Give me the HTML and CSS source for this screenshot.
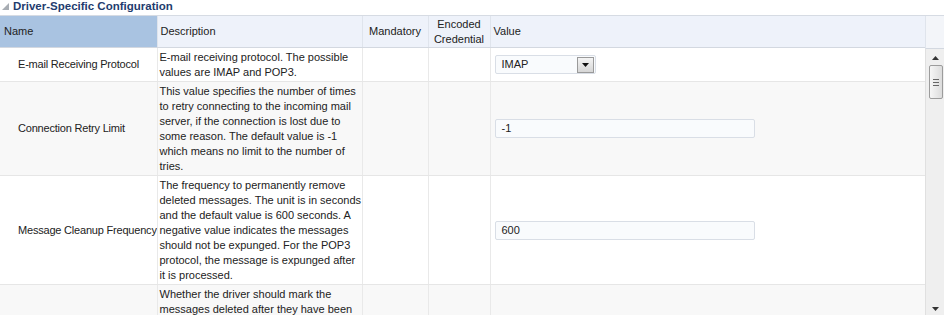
FILE: index.html
```html
<!DOCTYPE html>
<html lang="en">
<head>
    <meta charset="UTF-8">
    <title>Driver-Specific Configuration</title>
    <link rel="stylesheet" href="styles.css">
</head>
<body>
    <div class="section-title">
        <span class="disclosure"></span>
        <span>Driver-Specific Configuration</span>
    </div>
    <div class="grid">
        <div class="grid-main">
            <table class="config-table">
                <colgroup>
                    <col class="col-name">
                    <col class="col-desc">
                    <col class="col-mand">
                    <col class="col-enc">
                    <col class="col-value">
                </colgroup>
                <thead>
                    <tr>
                        <th class="sorted">Name</th>
                        <th>Description</th>
                        <th class="center">Mandatory</th>
                        <th class="center">Encoded Credential</th>
                        <th>Value</th>
                    </tr>
                </thead>
                <tbody>
                    <tr>
                        <td class="name">E-mail Receiving Protocol</td>
                        <td class="desc">E-mail receiving protocol. The possible<br>values are IMAP and POP3.</td>
                        <td></td>
                        <td></td>
                        <td class="value">
                            <div class="select">
                                <span>IMAP</span>
                                <span class="select-btn">
                                    <svg width="7" height="4" viewBox="0 0 7 4"><path d="M0 0h7L3.5 4z" fill="#111"/></svg>
                                </span>
                            </div>
                        </td>
                    </tr>
                    <tr class="alt">
                        <td class="name">Connection Retry Limit</td>
                        <td class="desc">This value specifies the number of times<br>to retry connecting to the incoming mail<br>server, if the connection is lost due to<br>some reason. The default value is -1<br>which means no limit to the number of<br>tries.</td>
                        <td></td>
                        <td></td>
                        <td class="value"><div class="text-input">-1</div></td>
                    </tr>
                    <tr>
                        <td class="name">Message Cleanup Frequency</td>
                        <td class="desc">The frequency to permanently remove<br>deleted messages. The unit is in seconds<br>and the default value is 600 seconds. A<br>negative value indicates the messages<br>should not be expunged. For the POP3<br>protocol, the message is expunged after<br>it is processed.</td>
                        <td></td>
                        <td></td>
                        <td class="value"><div class="text-input">600</div></td>
                    </tr>
                    <tr class="alt">
                        <td class="name">Mark Messages Deleted</td>
                        <td class="desc">Whether the driver should mark the<br>messages deleted after they have been<br>processed. Set this to true to have the<br>driver flag the processed messages as<br>deleted on the mail server.</td>
                        <td></td>
                        <td></td>
                        <td class="value"></td>
                    </tr>
                </tbody>
            </table>
        </div>
        <div class="scrollbar">
            <div class="scroll-head"></div>
            <div class="scroll-track">
                <svg class="arrow" width="7" height="4" viewBox="0 0 7 4"><path d="M0 4h7L3.5 0z" fill="#333"/></svg>
                <div class="thumb">
                    <i></i><i></i><i></i>
                </div>
                <div class="track-fill"></div>
                <svg class="arrow" width="7" height="4" viewBox="0 0 7 4"><path d="M0 0h7L3.5 4z" fill="#333"/></svg>
            </div>
        </div>
    </div>
</body>
</html>
```
FILE: styles.css
```css
body {
    margin: 0;
    font-family: "Liberation Sans", Arial, sans-serif;
    font-size: 11px;
    color: #222;
    background: #fff;
    overflow: hidden;
}
.section-title {
    display: flex;
    align-items: center;
    gap: 4px;
    height: 12px;
    padding-left: 2px;
    margin-bottom: 3px;
    font-size: 11.5px;
    font-weight: bold;
    color: #1f3c6e;
    line-height: 12px;
    overflow: hidden;
}
.section-title span:last-child { margin-top: -1px; }
.disclosure {
    width: 0;
    height: 0;
    border-left: 7px solid transparent;
    border-bottom: 7px solid #a8adb3;
}
.grid {
    display: flex;
    height: 300px;
    border-top: 1px solid #d6dbe3;
}
.grid-main { width: 925px; overflow: hidden; }
.config-table {
    width: 925px;
    table-layout: fixed;
    border-collapse: collapse;
}
.col-name { width: 157px; }
.col-desc { width: 205px; }
.col-mand { width: 66px; }
.col-enc { width: 62px; }
.col-value { width: 435px; }
.config-table th {
    height: 31px;
    padding: 0 3px;
    font-weight: normal;
    text-align: left;
    line-height: 15px;
    background: #eef2fa;
    border-bottom: 1px solid #d3d8e0;
    border-right: 1px solid #dfe4ec;
}
.config-table th.sorted { background: #a9c3e1; padding-left: 4px; }
.config-table th.center { text-align: center; }
.config-table td {
    padding: 1px 2px 1px 2px;
    line-height: 15px;
    vertical-align: middle;
    border-bottom: 1px solid #e6e6e6;
    border-right: 1px solid #e9e9e9;
}
.config-table tr.alt td { background: #f8f8f8; }
.config-table td.name {
    padding-left: 18px;
    letter-spacing: -0.2px;
    white-space: nowrap;
    overflow: hidden;
}
.config-table td.desc {
    padding-top: 2px;
    vertical-align: top;
    white-space: nowrap;
    overflow: hidden;
}
.config-table td.value { padding-left: 4px; }
.select {
    display: flex;
    align-items: center;
    justify-content: space-between;
    width: 92px;
    height: 17px;
    padding: 0 1px 0 6px;
    border: 1px solid #d9dee6;
    border-radius: 2px;
    background: #f9fbfd;
}
.select-btn {
    display: flex;
    align-items: center;
    justify-content: center;
    width: 15px;
    height: 14px;
    border: 1px solid #9a9a9a;
    background: linear-gradient(#f4f4f4, #d6d6d6);
}
.text-input {
    width: 252px;
    height: 17px;
    line-height: 17px;
    padding-left: 6px;
    border: 1px solid #d9dee6;
    border-radius: 2px;
    background: #f9fbfd;
}
.scrollbar {
    width: 19px;
    display: flex;
    flex-direction: column;
}
.scroll-head {
    height: 32px;
    background: #f3f5f9;
    border-left: 1px solid #dfe4ec;
    border-bottom: 1px solid #d3d8e0;
}
.scroll-track {
    flex: 1;
    display: flex;
    flex-direction: column;
    align-items: center;
    padding: 6px 0 0 1px;
    background: #efefef;
    border-left: 1px solid #e0e0e0;
}
.arrow { margin: 1px 0 5px; }
.thumb {
    display: flex;
    flex-direction: column;
    align-items: center;
    justify-content: center;
    gap: 2px;
    width: 12px;
    height: 32px;
    border: 1px solid #9c9c9c;
    border-radius: 2px;
    background: linear-gradient(90deg, #f6f6f6, #dcdcdc);
}
.thumb i {
    display: block;
    width: 6px;
    height: 1px;
    background: #666;
}
.track-fill { flex: 1; }
```
